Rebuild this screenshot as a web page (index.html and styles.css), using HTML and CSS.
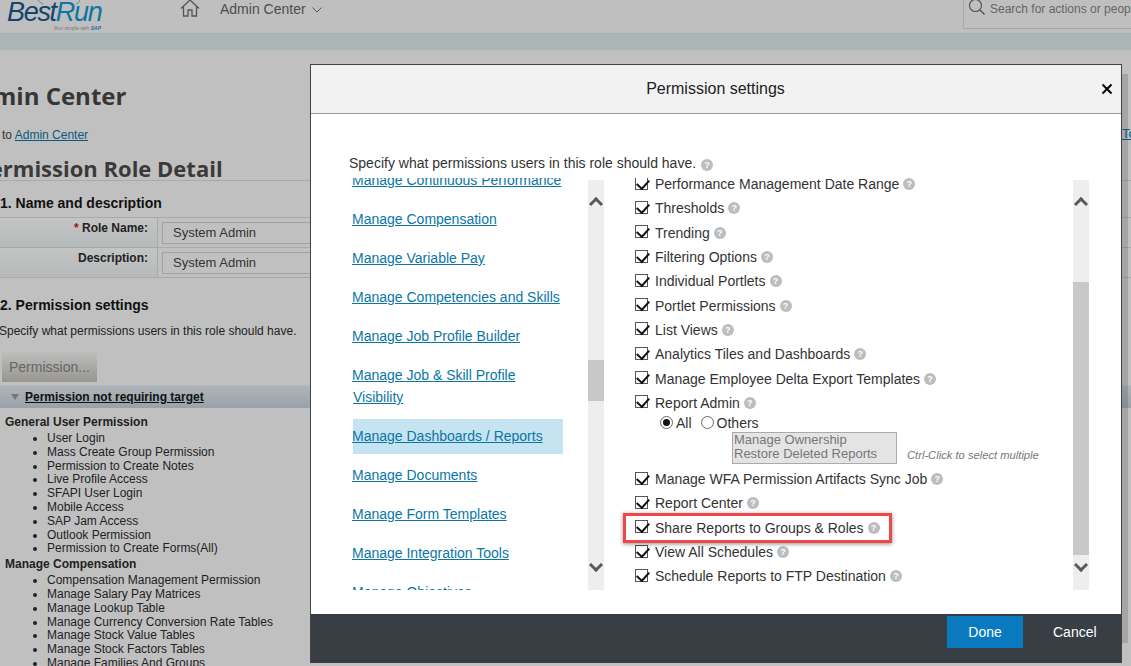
FILE: index.html
```html
<!DOCTYPE html>
<html lang="en">
<head>
<meta charset="utf-8">
<title>Permission settings</title>
<link rel="stylesheet" href="styles.css">
</head>
<body>
<div class="page">
  <header class="topbar">
    <div class="logo">
      <svg class="logo-arc" viewBox="0 0 44 5" width="44" height="5"><path d="M1 0q2 3 5 4M43 0q-1 3-4 4" fill="none" stroke="#5f8fb0"/></svg>
      <span class="logo-word"><span class="logo-best">Best</span><span class="logo-run">Run</span></span>
      <span class="logo-tag">Run simple with <b>SAP</b></span>
    </div>
    <svg class="home" viewBox="0 0 20 18" width="20" height="18"><path d="M1 9.500 10 1l9 8.500M3.500 8v9h4.500v-6h4v6h4.500V8" fill="none" stroke="#555" stroke-width="1.300"/></svg>
    <div class="nav">Admin Center
      <svg viewBox="0 0 10 6" width="10" height="6"><path d="M.5.500 5 5l4.500-4.500" fill="none" stroke="#555"/></svg>
    </div>
    <div class="search">
      <svg viewBox="0 0 18 18" width="18" height="18"><circle cx="7.500" cy="7.500" r="6" fill="none" stroke="#555" stroke-width="1.200"/><path d="m12 12 4.500 4.500" stroke="#555" stroke-width="1.400"/></svg>
      <span>Search for actions or people</span>
    </div>
  </header>
  <div class="strip"></div>
  <main class="content">
    <h1 class="admin-title">Admin Center</h1>
    <p class="crumb">Back to <a>Admin Center</a></p>
    <h2 class="role-title">Permission Role Detail</h2>
    <h3 class="section">1. Name and description</h3>
    <div class="form-table">
      <div class="form-row">
        <div class="form-label"><i>*</i> Role Name:</div>
        <div class="form-cell"><div class="field">System Admin</div></div>
      </div>
      <div class="form-row">
        <div class="form-label">Description:</div>
        <div class="form-cell"><div class="field">System Admin</div></div>
      </div>
    </div>
    <h3 class="section section-two">2. Permission settings</h3>
    <p class="spec">Specify what permissions users in this role should have.</p>
    <div class="perm-btn">Permission...</div>
    <div class="perm-head"><span class="tri"></span><b>Permission not requiring target</b></div>
    <div class="perm-group">General User Permission</div>
    <ul class="perm-list">
      <li>User Login</li><li>Mass Create Group Permission</li><li>Permission to Create Notes</li><li>Live Profile Access</li><li>SFAPI User Login</li><li>Mobile Access</li><li>SAP Jam Access</li><li>Outlook Permission</li><li>Permission to Create Forms(All)</li>
    </ul>
    <div class="perm-group">Manage Compensation</div>
    <ul class="perm-list">
      <li>Compensation Management Permission</li><li>Manage Salary Pay Matrices</li><li>Manage Lookup Table</li><li>Manage Currency Conversion Rate Tables</li><li>Manage Stock Value Tables</li><li>Manage Stock Factors Tables</li><li>Manage Families And Groups</li>
    </ul>
  </main>
</div>

<div class="modal-shade"></div>
<div class="far-link">To</div>

<section class="modal">
  <div class="modal-head">
    <span>Permission settings</span>
    <svg class="close" viewBox="0 0 12 12" width="12" height="12"><path d="m1.500 1.500 9 9m0-9-9 9" stroke="#000" stroke-width="2"/></svg>
  </div>
  <div class="modal-body">
    <p class="modal-spec">Specify what permissions users in this role should have. <span class="q">?</span></p>
    <div class="columns">
      <div class="pane cats">
        <div class="cat-list">
          <a class="cat">Manage Continuous Performance</a>
          <a class="cat">Manage Compensation</a>
          <a class="cat">Manage Variable Pay</a>
          <a class="cat">Manage Competencies and Skills</a>
          <a class="cat">Manage Job Profile Builder</a>
          <a class="cat">Manage Job &amp; Skill Profile Visibility</a>
          <a class="cat cat-sel">Manage Dashboards / Reports</a>
          <a class="cat">Manage Documents</a>
          <a class="cat">Manage Form Templates</a>
          <a class="cat">Manage Integration Tools</a>
          <a class="cat">Manage Objectives</a>
        </div>
        <div class="bar bar-left"><span class="arrow up"></span><span class="thumb"></span><span class="arrow down"></span></div>
      </div>
      <div class="pane perms">
        <div class="perm-items">
          <label class="item"><span class="cb"></span>Performance Management Date Range <span class="q">?</span></label>
          <label class="item"><span class="cb"></span>Thresholds <span class="q">?</span></label>
          <label class="item"><span class="cb"></span>Trending <span class="q">?</span></label>
          <label class="item"><span class="cb"></span>Filtering Options <span class="q">?</span></label>
          <label class="item"><span class="cb"></span>Individual Portlets <span class="q">?</span></label>
          <label class="item"><span class="cb"></span>Portlet Permissions <span class="q">?</span></label>
          <label class="item"><span class="cb"></span>List Views <span class="q">?</span></label>
          <label class="item"><span class="cb"></span>Analytics Tiles and Dashboards <span class="q">?</span></label>
          <label class="item"><span class="cb"></span>Manage Employee Delta Export Templates <span class="q">?</span></label>
          <label class="item"><span class="cb"></span>Report Admin <span class="q">?</span></label>
          <div class="radios"><span class="radio on"></span>All<span class="radio"></span>Others</div>
          <div class="multi">
            <div class="multi-box"><div>Manage Ownership</div><div>Restore Deleted Reports</div></div>
            <em>Ctrl-Click to select multiple</em>
          </div>
          <label class="item"><span class="cb"></span>Manage WFA Permission Artifacts Sync Job <span class="q">?</span></label>
          <label class="item"><span class="cb"></span>Report Center <span class="q">?</span></label>
          <label class="item"><span class="cb"></span>Share Reports to Groups &amp; Roles <span class="q">?</span></label>
          <label class="item"><span class="cb"></span>View All Schedules <span class="q">?</span></label>
          <label class="item"><span class="cb"></span>Schedule Reports to FTP Destination <span class="q">?</span></label>
        </div>
        <div class="bar bar-right"><span class="arrow up"></span><span class="thumb"></span><span class="arrow down"></span></div>
        <div class="highlight"></div>
      </div>
    </div>
  </div>
  <div class="modal-foot">
    <button class="done">Done</button>
    <button class="cancel">Cancel</button>
  </div>
</section>
</body>
</html>
```
FILE: styles.css
```css
* { box-sizing: border-box; }
html, body { margin: 0; height: 100%; }
body {
  width: 1131px;
  height: 666px;
  overflow: hidden;
  position: relative;
  background: #c0c0c0;
  font-family: "Liberation Sans", Arial, sans-serif;
  color: #333;
}
a { color: #0a5a7f; text-decoration: underline; }

.page { height: 666px; overflow: hidden; }

.topbar {
  height: 34px;
  display: flex;
  align-items: flex-start;
  background: #bfbfbf;
  border-bottom: 1px solid #a9adae;
  position: relative;
}
.logo { width: 180px; padding-left: 7px; display: flex; flex-direction: column; height: 33px; position: relative; }
.logo-arc { position: absolute; left: 37px; top: 0; }
.logo-word { font-size: 27px; font-style: italic; line-height: 26px; margin-top: -1px; letter-spacing: -1.300px; }
.logo-best { color: #11446f; }
.logo-run { color: #0f75a4; }
.logo-tag { font-size: 5px; color: #777; margin-left: 47px; line-height: 6px; }
.logo-tag b { color: #2a6aa5; font-style: italic; }
.home { margin-top: -1px; }
.nav { margin-left: 20px; margin-top: 1px; font-size: 14px; line-height: 16px; color: #4d4d4d; display: flex; align-items: center; gap: 6px; }
.nav svg { margin-top: 1px; }
.search {
  margin-left: auto;
  width: 168px;
  height: 29px;
  border: 1px solid #a9a9a9;
  border-top: 0;
  border-right: 0;
  display: flex;
  align-items: flex-start;
  gap: 4px;
  padding-left: 4px;
  font-size: 12px;
  line-height: 18px;
  color: #666;
  white-space: nowrap;
  overflow: hidden;
}
.search svg { flex: none; margin-top: -2px; }
.strip { height: 16px; background: #abb6b7; }

.content { margin-left: -47px; }
.admin-title { margin: 30px 0 0 8px; font: 700 24px/32px "Open Sans", sans-serif; color: #363636; }
.crumb { margin: 15px 0 0 19px; font-size: 12px; line-height: 16px; color: #333; }
.role-title { margin: 13px 0 0 23px; font: 700 22px/24px "Open Sans", sans-serif; color: #3a3a3a; border-bottom: 1px solid #aaa; }
.section { margin: 13px 0 0 47px; font-size: 14px; line-height: 18px; color: #111; }
.section-two { margin-top: 18px; }
.form-table { margin-top: 5px; margin-left: 47px; border-top: 1px solid #aaa; }
.form-row { display: flex; height: 30px; border-bottom: 1px solid #aaa; }
.form-label {
  width: 158px;
  flex: none;
  background: linear-gradient(#c4c4c4, #b6babb);
  border-right: 1px solid #aaa;
  text-align: right;
  padding: 3px 9px 0 0;
  font-size: 12px;
  font-weight: 700;
  line-height: 14px;
  color: #222;
}
.form-label i { color: #a11; font-style: normal; }
.form-cell { flex: 1; padding: 4px 4px; }
.field { height: 22px; width: 160px; border: 1px solid #a3a3a3; font-size: 13px; line-height: 20px; padding-left: 10px; color: #333; }
.spec { margin: 9px 0 0 47px; font-size: 12px; line-height: 16px; color: #222; text-indent: -1px; }
.perm-btn {
  margin: 13px 0 0 49px;
  width: 95px;
  height: 30px;
  background: linear-gradient(#bdbdbd, #97968f);
  color: #666;
  font-size: 14px;
  line-height: 30px;
  padding-left: 7px;
}
.perm-head {
  margin: 3px 0 0 47px;
  height: 23px;
  background: linear-gradient(#aeb4ba, #9aa2a9);
  border-top: 1px solid #b5b8ba;
  font-size: 12px;
  line-height: 18px;
  color: #111;
  padding-left: 11px;
  display: flex;
  align-items: center;
  gap: 6px;
}
.perm-head b { text-decoration: underline; }
.tri { width: 0; height: 0; border: 4px solid transparent; border-top: 6px solid #777; border-bottom: 0; }
.perm-group { margin-left: 52px; font-size: 12px; font-weight: 700; line-height: 14px; color: #222; margin-top: 7px; }
.perm-list + .perm-group { margin-top: 1px; }
.perm-list { margin: 3px 0 0 47px; padding: 0 0 0 47px; list-style: disc; font-size: 12px; line-height: 13.800px; color: #222; }

.modal-shade { position: absolute; left: 1122px; top: 74px; width: 6px; height: 569px; background: rgba(0,0,0,.14); }
.far-link { position: absolute; left: 1122px; top: 127px; width: 9px; font-size: 13px; line-height: 14px; color: #0a5a7f; text-decoration: underline; overflow: hidden; }

.modal {
  position: absolute;
  left: 310px;
  top: 64px;
  width: 812px;
  height: 599px;
  background: #fff;
  border: 1px solid #444;
  border-bottom: 0;
  display: flex;
  flex-direction: column;
}
.modal-head {
  height: 49px;
  flex: none;
  background: #f2f2f2;
  border-bottom: 1px solid #999;
  display: flex;
  align-items: center;
  justify-content: center;
  font-size: 16px;
  color: #222;
  position: relative;
  padding-right: 1px;
}
.close { position: absolute; right: 8px; top: 18px; }
.modal-body { flex: 1; padding: 41px 0 0 38px; min-height: 0; }
.modal-spec { margin: 0; font-size: 14px; line-height: 16px; color: #333; }
.modal-spec .q { margin-left: 1px; }
.columns { display: flex; margin-top: 7px; height: 412px; }
.pane { position: relative; height: 412px; overflow: hidden; }
.cats { width: 255px; display: flex; padding-left: 4px; flex: none; }
.cat-list { width: 239px; height: 420px; margin-top: -9px; flex: none; }
.cat {
  display: block;
  width: 210px;
  font-size: 14px;
  line-height: 22px;
  color: #0a76a5;
  margin-bottom: 17px;
  text-indent: -1px;
}
.cat-sel { background: #c5e3f1; height: 35px; line-height: 35px; margin: -6px 0 10px; }
.bar { width: 16px; height: 410px; margin-top: 2px; background: #eee; position: relative; flex: none; }
.bar-left { margin-left: -4px; }
.thumb { position: absolute; background: #c8c8c8; left: 0; width: 16px; }
.bar-left .thumb { top: 180px; height: 41px; }
.bar-right .thumb { top: 102px; height: 273px; }
.arrow { position: absolute; left: 3px; width: 10px; height: 10px; border: solid #5a5a5a; border-width: 3px 0 0 3px; }
.arrow.up { top: 19px; transform: rotate(45deg); }
.arrow.down { top: 380px; transform: rotate(225deg); }

.perms { width: 485px; display: flex; padding-left: 31px; flex: none; }
.perm-items { width: 438px; height: 420px; flex: none; margin-top: -6px; }
.item { display: flex; align-items: center; height: 24.300px; font-size: 14px; color: #333; white-space: nowrap; }
.cb {
  width: 13px;
  height: 13px;
  border: 1px solid #555;
  background: #fff;
  margin-right: 7px;
  position: relative;
  flex: none;
  top: -1px;
}
.cb::after {
  content: "";
  position: absolute;
  left: 3px;
  top: -1px;
  width: 6px;
  height: 10px;
  border: solid #111;
  border-width: 0 2px 2px 0;
  transform: rotate(42deg);
}
.q {
  display: inline-block;
  width: 12px;
  height: 12px;
  border-radius: 50%;
  background: #bdbdbd;
  color: #fff;
  font-size: 9px;
  line-height: 12px;
  text-align: center;
  font-weight: 700;
  margin-left: 4px;
}
.radios { display: flex; align-items: center; height: 16px; font-size: 14px; margin-left: 25px; color: #333; }
.radio { width: 13px; height: 13px; border: 1px solid #666; border-radius: 50%; margin-right: 3px; position: relative; flex: none; }
.radio:not(.on) { margin-left: 9px; }
.radio.on::after { content: ""; position: absolute; left: 2px; top: 2px; width: 7px; height: 7px; border-radius: 50%; background: #111; }
.multi { display: flex; align-items: flex-end; margin: 1px 0 0 97px; height: 32px; }
.multi-box { width: 165px; height: 32px; flex: none; background: #e4e4e4; border: 1px solid #aaa; font-size: 13px; line-height: 14px; color: #777; padding-left: 1px; overflow: hidden; }
.multi em { font-size: 11.200px; color: #777; margin: 0 0 2px 10px; line-height: 14px; white-space: nowrap; }
.multi + .item { margin-top: 3px; }
.highlight {
  position: absolute;
  left: 19px;
  top: 335px;
  width: 269px;
  height: 30px;
  border: 3px solid #f0474a;
  box-shadow: 0 1px 4px rgba(0,0,0,.45);
}

.modal-foot {
  height: 49px;
  flex: none;
  background: #393e44;
  display: flex;
  justify-content: flex-end;
  align-items: flex-start;
  padding: 2px 1px 0 0;
}
.modal-foot button { border: 0; font: 14px "Liberation Sans", Arial, sans-serif; color: #fff; background: none; height: 32px; padding: 0; }
.modal-foot .done { background: #0a7abf; width: 76px; }
.cancel { width: 97px; text-align: left; padding-left: 30px !important; }
```
